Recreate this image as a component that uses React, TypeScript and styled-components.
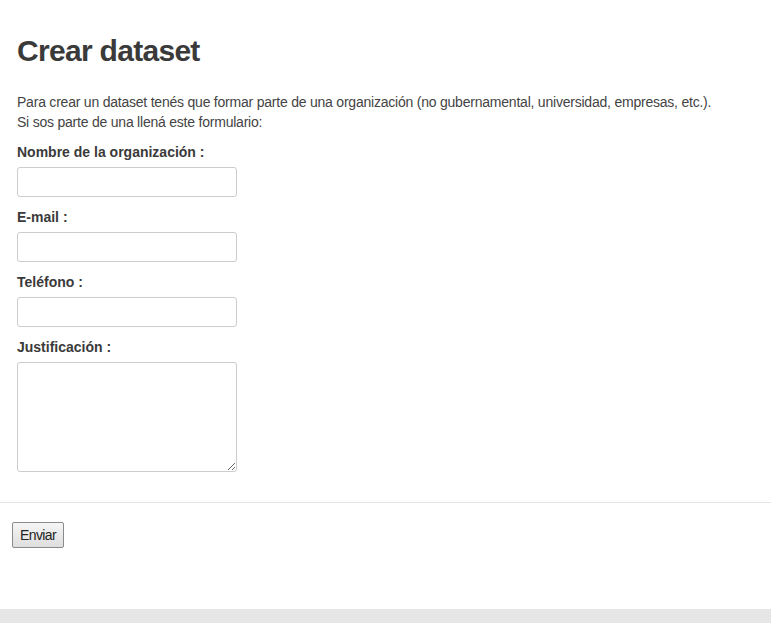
import React from "react";
import styled, { createGlobalStyle } from "styled-components";

const Global = createGlobalStyle`
  html, body { margin: 0; padding: 0; background: #fff; }
  body { font-family: "Liberation Sans", Arial, sans-serif; color: #444; }
`;

const Page = styled.div`
  min-height: 623px;
  display: flex;
  flex-direction: column;
`;

const Content = styled.div`
  padding: 0 17px;
`;

const Title = styled.h1`
  margin: 33px 0 0;
  font-size: 30px;
  line-height: 36px;
  font-weight: bold;
  letter-spacing: -0.7px;
  color: #3a3a3a;
`;

const Intro = styled.p`
  margin: 23px 0 10px;
  font-size: 14px;
  line-height: 20px;
  letter-spacing: -0.22px;
  color: #444;
`;

const Field = styled.div`
  display: flex;
  flex-direction: column;
  align-items: flex-start;
  margin-bottom: 10px;
`;

const Label = styled.label`
  font-size: 14px;
  line-height: 20px;
  font-weight: bold;
  color: #3a3a3a;
  margin-bottom: 5px;
`;

const Input = styled.input`
  box-sizing: border-box;
  width: 220px;
  height: 30px;
  border: 1px solid #ccc;
  border-radius: 3px;
  background: #fff;
  padding: 4px 6px;
  margin: 0;
`;

const TextArea = styled.textarea`
  box-sizing: border-box;
  width: 220px;
  height: 110px;
  border: 1px solid #ccc;
  border-radius: 3px;
  background: #fff;
  padding: 4px 6px;
  margin: 0;
`;

const Rule = styled.hr`
  margin: 20px 0 19px;
  border: 0;
  border-top: 1px solid #e5e5e5;
`;

const Actions = styled.div`
  padding: 0 12px;
`;

const Button = styled.button`
  box-sizing: border-box;
  height: 26px;
  padding: 0 7px;
  font-family: "Liberation Sans", Arial, sans-serif;
  font-size: 14px;
  letter-spacing: -0.6px;
  color: #222;
  border: 1px solid #8a8a8a;
  border-radius: 2px;
  background: linear-gradient(#f6f6f6, #dedede);
`;

const Spacer = styled.div`
  flex: 1;
`;

const Footer = styled.div`
  height: 14px;
  background: #e6e6e6;
`;

const fields = [
  { id: "org", label: "Nombre de la organización :" },
  { id: "email", label: "E-mail :" },
  { id: "tel", label: "Teléfono :" },
];

export default function App() {
  return (
    <Page>
      <Global />
      <Content>
        <Title>Crear dataset</Title>
        <Intro>
          Para crear un dataset tenés que formar parte de una organización (no gubernamental, universidad, empresas, etc.).
          <br />
          Si sos parte de una llená este formulario:
        </Intro>
        {fields.map((f) => (
          <Field key={f.id}>
            <Label htmlFor={f.id}>{f.label}</Label>
            <Input id={f.id} type="text" />
          </Field>
        ))}
        <Field>
          <Label htmlFor="just">Justificación :</Label>
          <TextArea id="just" />
        </Field>
      </Content>
      <Rule />
      <Actions>
        <Button type="button">Enviar</Button>
      </Actions>
      <Spacer />
      <Footer />
    </Page>
  );
}
